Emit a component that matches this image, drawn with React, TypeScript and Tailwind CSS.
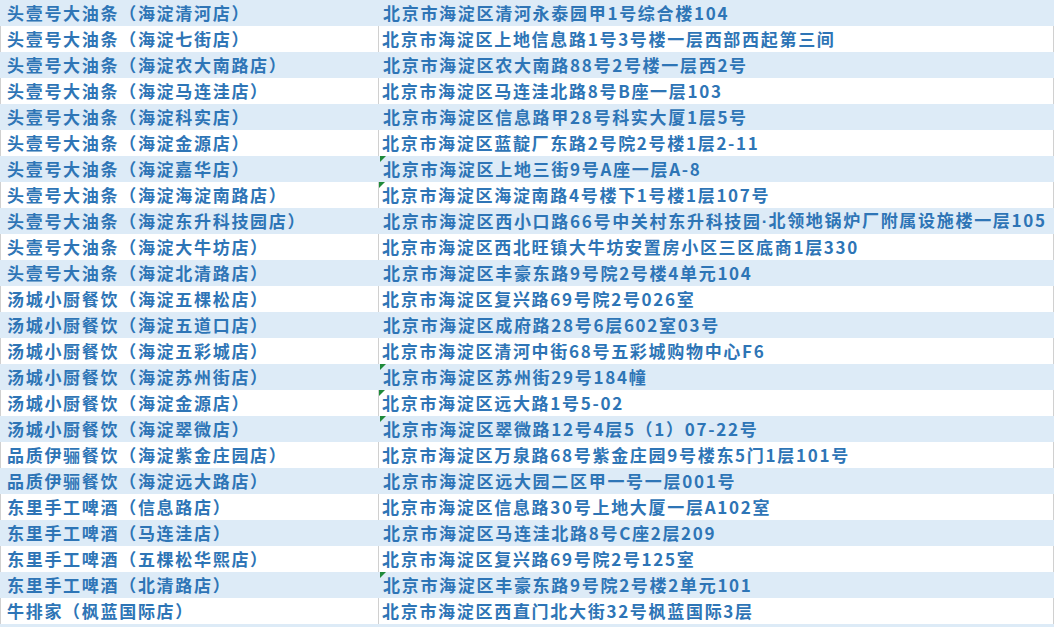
const rows: { name: string; addr: string; flag?: boolean }[] = [
  { name: '头壹号大油条（海淀清河店）', addr: '北京市海淀区清河永泰园甲1号综合楼104' },
  { name: '头壹号大油条（海淀七街店）', addr: '北京市海淀区上地信息路1号3号楼一层西部西起第三间' },
  { name: '头壹号大油条（海淀农大南路店）', addr: '北京市海淀区农大南路88号2号楼一层西2号' },
  { name: '头壹号大油条（海淀马连洼店）', addr: '北京市海淀区马连洼北路8号B座一层103' },
  { name: '头壹号大油条（海淀科实店）', addr: '北京市海淀区信息路甲28号科实大厦1层5号' },
  { name: '头壹号大油条（海淀金源店）', addr: '北京市海淀区蓝靛厂东路2号院2号楼1层2-11' },
  { name: '头壹号大油条（海淀嘉华店）', addr: '北京市海淀区上地三街9号A座一层A-8', flag: true },
  { name: '头壹号大油条（海淀海淀南路店）', addr: '北京市海淀区海淀南路4号楼下1号楼1层107号', flag: true },
  { name: '头壹号大油条（海淀东升科技园店）', addr: '北京市海淀区西小口路66号中关村东升科技园·北领地锅炉厂附属设施楼一层105' },
  { name: '头壹号大油条（海淀大牛坊店）', addr: '北京市海淀区西北旺镇大牛坊安置房小区三区底商1层330' },
  { name: '头壹号大油条（海淀北清路店）', addr: '北京市海淀区丰豪东路9号院2号楼4单元104' },
  { name: '汤城小厨餐饮（海淀五棵松店）', addr: '北京市海淀区复兴路69号院2号026室' },
  { name: '汤城小厨餐饮（海淀五道口店）', addr: '北京市海淀区成府路28号6层602室03号' },
  { name: '汤城小厨餐饮（海淀五彩城店）', addr: '北京市海淀区清河中街68号五彩城购物中心F6' },
  { name: '汤城小厨餐饮（海淀苏州街店）', addr: '北京市海淀区苏州街29号184幢', flag: true },
  { name: '汤城小厨餐饮（海淀金源店）', addr: '北京市海淀区远大路1号5-02', flag: true },
  { name: '汤城小厨餐饮（海淀翠微店）', addr: '北京市海淀区翠微路12号4层5（1）07-22号', flag: true },
  { name: '品质伊骊餐饮（海淀紫金庄园店）', addr: '北京市海淀区万泉路68号紫金庄园9号楼东5门1层101号' },
  { name: '品质伊骊餐饮（海淀远大路店）', addr: '北京市海淀区远大园二区甲一号一层001号' },
  { name: '东里手工啤酒（信息路店）', addr: '北京市海淀区信息路30号上地大厦一层A102室' },
  { name: '东里手工啤酒（马连洼店）', addr: '北京市海淀区马连洼北路8号C座2层209' },
  { name: '东里手工啤酒（五棵松华熙店）', addr: '北京市海淀区复兴路69号院2号125室' },
  { name: '东里手工啤酒（北清路店）', addr: '北京市海淀区丰豪东路9号院2号楼2单元101', flag: true },
  { name: '牛排家（枫蓝国际店）', addr: '北京市海淀区西直门北大街32号枫蓝国际3层' },
]

// the middle dot is full-width in the CJK font, so draw it from a Latin one
function Addr({ text }: { text: string }) {
  const parts = text.split('·')
  return (
    <>
      {parts.map((p, i) => (
        <span key={i}>
          {i > 0 && <span className="font-['Liberation_Sans'] tracking-[1px]">·</span>}
          {p}
        </span>
      ))}
    </>
  )
}

export default function App() {
  return (
    <div
      className="w-[1056px] h-[627px] overflow-hidden bg-white text-[17px] font-semibold tracking-[1.7px] text-[#2e75b6]"
      style={{ fontFamily: '"Noto Sans CJK SC", "Liberation Sans", sans-serif' }}
    >
      <div className="w-[1054px]">
        {rows.map((row, i) => {
          const blue = i % 2 === 0
          return (
            <div
              key={i}
              className={
                blue
                  ? 'flex h-[26px] items-center bg-[#ddebf7]'
                  : 'flex h-[26px] items-center bg-white border-l border-r border-[#d0d0d0]'
              }
            >
              <div
                className={
                  blue
                    ? 'w-[380px] h-full flex items-center pl-[7px] whitespace-nowrap overflow-hidden'
                    : 'w-[378px] h-full flex items-center pl-[6px] whitespace-nowrap overflow-hidden border-r border-[#d0d0d0]'
                }
              >
                {row.name}
              </div>
              <div className="relative flex-1 h-full flex items-center pl-[3px] whitespace-nowrap overflow-hidden">
                {row.flag && (
                  <span className="absolute left-0 top-0 w-0 h-0 border-t-[6px] border-r-[6px] border-t-[#1f8a3a] border-r-transparent" />
                )}
                <Addr text={row.addr} />
              </div>
            </div>
          )
        })}
        <div className="h-[26px] bg-[#ddebf7]" />
      </div>
    </div>
  )
}
